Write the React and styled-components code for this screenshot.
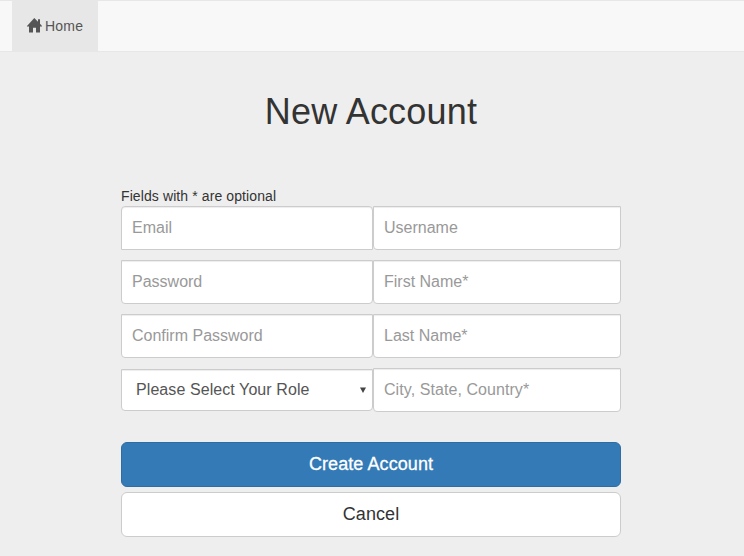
import React from 'react';
import styled, { createGlobalStyle } from 'styled-components';

const Global = createGlobalStyle`
  *, *::before, *::after { box-sizing: border-box; }
  body {
    margin: 0;
    background: #eee;
    color: #333;
    font: 14px/20px "Liberation Sans", Arial, sans-serif;
    overflow: hidden;
  }
`;

const Navbar = styled.nav`
  display: flex;
  height: 52px;
  padding-left: 12px;
  background: #f8f8f8;
  border: solid #e7e7e7;
  border-width: 1px 0;
`;

const NavLink = styled.a`
  display: flex;
  align-items: center;
  gap: 3px;
  width: 86px;
  padding-left: 15px;
  background: #e7e7e7;
  color: #555;
  letter-spacing: 0.2px;
`;

const HomeGlyph = styled.svg`
  display: block;
  width: 15px;
  height: 15px;
  fill: #555;
  margin-top: -2px;
`;

const Form = styled.form`
  width: 500px;
  margin: 0 0 0 121px;
`;

const Title = styled.h1`
  margin: 40px 0 0;
  font-size: 36px;
  line-height: 40px;
  font-weight: 400;
  text-align: center;
  letter-spacing: 0.2px;
`;

const Hint = styled.div`
  margin-top: 54px;
  color: #333;
  letter-spacing: 0.1px;
`;

const Fields = styled.div`
  display: grid;
  grid-template-columns: 252px 248px;
  grid-auto-rows: 44px;
  row-gap: 10px;
  align-items: center;
`;

const Input = styled.input`
  width: 100%;
  height: 44px;
  padding: 10px;
  border: 1px solid #ccc;
  border-radius: ${(p) => (p.$first ? '4px 4px 0 0' : '0 0 4px 4px')};
  background: #fff;
  box-shadow: inset 0 1px 1px rgba(0, 0, 0, 0.075);
  font: 16px "Liberation Sans", Arial, sans-serif;
  letter-spacing: ${(p) => p.$tracking || '0'};
  outline: none;
  &::placeholder { color: #999; opacity: 1; }
`;

const RoleSelect = styled.div`
  display: flex;
  align-items: center;
  justify-content: space-between;
  height: 42px;
  padding: 0 6px 0 14px;
  border: 1px solid #ccc;
  border-radius: 0 0 4px 4px;
  background: #fff;
  box-shadow: inset 0 1px 1px rgba(0, 0, 0, 0.075);
  color: #555;
  font-size: 16px;
  letter-spacing: 0.08px;
`;

const Arrow = styled.svg`
  width: 6px;
  height: 6px;
  fill: #444;
`;

const Button = styled.button`
  display: block;
  width: 100%;
  height: 45px;
  margin-top: ${(p) => (p.$primary ? '30px' : '5px')};
  padding: 0 0 2px;
  border: 1px solid ${(p) => (p.$primary ? '#2e6da4' : '#ccc')};
  border-radius: 6px;
  background: ${(p) => (p.$primary ? '#337ab7' : '#fff')};
  color: ${(p) => (p.$primary ? '#fff' : '#333')};
  font: 18px/24px "Liberation Sans", Arial, sans-serif;
  letter-spacing: 0.08px;
  -webkit-text-stroke: ${(p) => (p.$primary ? '0.3px #fff' : '0')};
`;

export default function App() {
  return (
    <>
      <Global />
      <Navbar>
        <NavLink>
          <HomeGlyph viewBox="0 0 15 15">
            <path d="M7.3 0 11 3.8V1.2h2v4.6L15 8v.6h-2V14.5H9V9.8H6V14.5H2V8.6H0V8Z" />
          </HomeGlyph>
          Home
        </NavLink>
      </Navbar>
      <Form>
        <Title>New Account</Title>
        <Hint>Fields with * are optional</Hint>
        <Fields>
          <Input placeholder="Email" $first />
          <Input placeholder="Username" />
          <Input placeholder="Password" />
          <Input placeholder="First Name*" />
          <Input placeholder="Confirm Password" />
          <Input placeholder="Last Name*" />
          <RoleSelect>
            Please Select Your Role
            <Arrow viewBox="0 0 6 6"><path d="M0 .5H6L3 6Z" /></Arrow>
          </RoleSelect>
          <Input placeholder="City, State, Country*" $tracking="0.07px" />
        </Fields>
        <Button type="button" $primary>Create Account</Button>
        <Button type="button">Cancel</Button>
      </Form>
    </>
  );
}
